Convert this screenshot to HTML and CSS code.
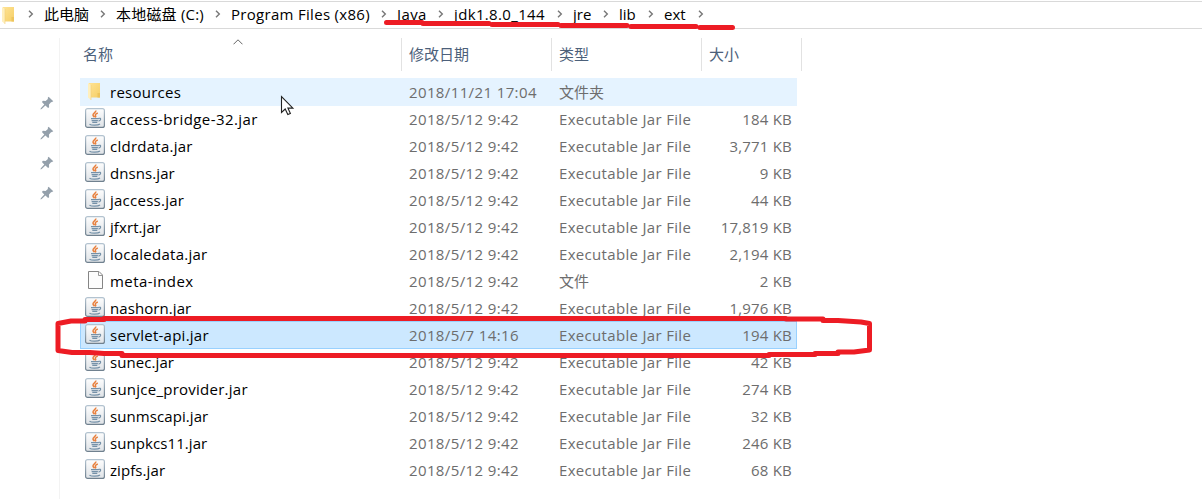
FILE: index.html
```html
<!DOCTYPE html>
<html lang="zh-CN">
<head>
  <meta charset="UTF-8" />
  <title>ext</title>
  <link rel="stylesheet" href="styles.css">
</head>
<body>

  <svg class="defs">
    <linearGradient id="fold" x1="0" y1="0" x2="1" y2="1">
      <stop offset="0" stop-color="#ffe394"/><stop offset="1" stop-color="#f5cf68"/>
    </linearGradient>
    <linearGradient id="tile" x1="0" y1="0" x2="0" y2="1">
      <stop offset="0" stop-color="#fdfdfd"/><stop offset="1" stop-color="#dfe3e7"/>
    </linearGradient>
    <linearGradient id="edge" x1="0" y1="0" x2="0" y2="1">
      <stop offset="0" stop-color="#b3c3d0"/><stop offset="1" stop-color="#70818f"/>
    </linearGradient>
    <symbol id="folder" viewBox="0 0 20 20">
      <path d="M4 2h11v14.500H4z" fill="url(#fold)"/>
      <path d="M12.500 12h2.500v4.500h-2.500z" fill="#edc45c"/>
      <path d="M3 2l3 2v15L3 16.500z" fill="#ffefbd"/>
      <path d="M6 4v15" stroke="#f0cf78" stroke-width=".6"/>
    </symbol>
    <symbol id="jar" viewBox="0 0 20 20">
      <rect x=".6" y=".6" width="18.800" height="18.800" rx="2" fill="url(#tile)" stroke="url(#edge)" stroke-width="1.200"/>
      <path d="M10.800 2.500c.6 1.900-3.400 2.800-2.800 4.700.3.900 1.300 1.400 1.500 2.100M12.800 5c-1.800.7-3 1.600-2.300 2.600.5.700.3 1.200-.3 1.800" fill="none" stroke="#e8803e" stroke-width="1.500"/>
      <path d="M6 10.700h7.700M6.600 12.600h6.300M7.300 14.300h5M4.500 16.200c2 1.400 8.500 1.300 10.500-.2M13.700 10.400c2.600-.8 2.600 2-.2 2.700" fill="none" stroke="#7591a8" stroke-width="1.200"/>
    </symbol>
    <symbol id="file" viewBox="0 0 20 20">
      <path d="M3.500 1.500h10.500l3.500 3.500v13.500H3.500z" fill="#fcfcfc" stroke="#858585"/>
      <path d="M13.500 1.500v4h4" fill="none" stroke="#999"/>
    </symbol>
    <symbol id="pin" viewBox="0 0 14 14">
      <path d="M8.600.7l4.700 4.500-1.300.9-1 .1-2 2.300.1 2.700-1 .8-2.700-2.600-3.700 3.700-1.200.3.300-1.200 3.500-3.600L1.900 6l1-1.200 2.700.1L7.900 3l-.1-1.300z" fill="#94a0ab"/>
    </symbol>
    <symbol id="arrow" viewBox="0 0 6 8">
      <path d="M1 .8L4.300 4 1 7.200" fill="none" stroke="#777" stroke-width="1.400"/>
    </symbol>
  </svg>

  <div class="address">
    <svg class="address-icon"><use href="#folder"/></svg>
    <svg class="arrow"><use href="#arrow"/></svg>
    <span class="crumb cjk">此电脑</span>
    <svg class="arrow"><use href="#arrow"/></svg>
    <span class="crumb drive">本地磁盘 (C:)</span>
    <svg class="arrow"><use href="#arrow"/></svg>
    <span class="crumb programs">Program Files (x86)</span>
    <svg class="arrow"><use href="#arrow"/></svg>
    <span class="crumb java">Java</span>
    <svg class="arrow"><use href="#arrow"/></svg>
    <span class="crumb jdk">jdk1.8.0_144</span>
    <svg class="arrow"><use href="#arrow"/></svg>
    <span class="crumb jre">jre</span>
    <svg class="arrow"><use href="#arrow"/></svg>
    <span class="crumb lib">lib</span>
    <svg class="arrow"><use href="#arrow"/></svg>
    <span class="crumb ext">ext</span>
    <svg class="arrow"><use href="#arrow"/></svg>
  </div>

  <div class="explorer">
    <div class="sidebar">
      <svg class="pin"><use href="#pin"/></svg>
      <svg class="pin"><use href="#pin"/></svg>
      <svg class="pin"><use href="#pin"/></svg>
      <svg class="pin"><use href="#pin"/></svg>
    </div>

    <div class="files">
      <div class="head">
        <span>名称<svg class="sort" viewBox="0 0 10 6"><path d="M.5 5.300L5 .8l4.500 4.500" fill="none" stroke="#666"/></svg></span>
        <span>修改日期</span>
        <span>类型</span>
        <span>大小</span>
      </div>
      <div class="row hover"><svg class="icon"><use href="#folder"/></svg><span class="name">resources</span><span class="date">2018/11/21 17:04</span><span class="type cn">文件夹</span><span class="size"></span></div>
      <div class="row"><svg class="icon"><use href="#jar"/></svg><span class="name wide">access-bridge-32.jar</span><span class="date">2018/5/12 9:42</span><span class="type">Executable Jar File</span><span class="size">184 KB</span></div>
      <div class="row"><svg class="icon"><use href="#jar"/></svg><span class="name">cldrdata.jar</span><span class="date">2018/5/12 9:42</span><span class="type">Executable Jar File</span><span class="size">3,771 KB</span></div>
      <div class="row"><svg class="icon"><use href="#jar"/></svg><span class="name tight">dnsns.jar</span><span class="date">2018/5/12 9:42</span><span class="type">Executable Jar File</span><span class="size">9 KB</span></div>
      <div class="row"><svg class="icon"><use href="#jar"/></svg><span class="name">jaccess.jar</span><span class="date">2018/5/12 9:42</span><span class="type">Executable Jar File</span><span class="size">44 KB</span></div>
      <div class="row"><svg class="icon"><use href="#jar"/></svg><span class="name tight">jfxrt.jar</span><span class="date">2018/5/12 9:42</span><span class="type">Executable Jar File</span><span class="size">17,819 KB</span></div>
      <div class="row"><svg class="icon"><use href="#jar"/></svg><span class="name">localedata.jar</span><span class="date">2018/5/12 9:42</span><span class="type">Executable Jar File</span><span class="size">2,194 KB</span></div>
      <div class="row"><svg class="icon"><use href="#file"/></svg><span class="name wide">meta-index</span><span class="date">2018/5/12 9:42</span><span class="type cn">文件</span><span class="size">2 KB</span></div>
      <div class="row"><svg class="icon"><use href="#jar"/></svg><span class="name tight">nashorn.jar</span><span class="date">2018/5/12 9:42</span><span class="type">Executable Jar File</span><span class="size">1,976 KB</span></div>
      <div class="row selected"><svg class="icon"><use href="#jar"/></svg><span class="name">servlet-api.jar</span><span class="date">2018/5/7 14:16</span><span class="type">Executable Jar File</span><span class="size">194 KB</span></div>
      <div class="row"><svg class="icon"><use href="#jar"/></svg><span class="name tight">sunec.jar</span><span class="date">2018/5/12 9:42</span><span class="type">Executable Jar File</span><span class="size">42 KB</span></div>
      <div class="row"><svg class="icon"><use href="#jar"/></svg><span class="name">sunjce_provider.jar</span><span class="date">2018/5/12 9:42</span><span class="type">Executable Jar File</span><span class="size">274 KB</span></div>
      <div class="row"><svg class="icon"><use href="#jar"/></svg><span class="name tight">sunmscapi.jar</span><span class="date">2018/5/12 9:42</span><span class="type">Executable Jar File</span><span class="size">32 KB</span></div>
      <div class="row"><svg class="icon"><use href="#jar"/></svg><span class="name tight">sunpkcs11.jar</span><span class="date">2018/5/12 9:42</span><span class="type">Executable Jar File</span><span class="size">246 KB</span></div>
      <div class="row"><svg class="icon"><use href="#jar"/></svg><span class="name tight">zipfs.jar</span><span class="date">2018/5/12 9:42</span><span class="type">Executable Jar File</span><span class="size">68 KB</span></div>
    </div>
  </div>

  <!-- pen marks and mouse pointer over the window -->
  <svg class="marks" viewBox="0 0 1202 499">
    <g fill="none" stroke="#ed1c24" stroke-width="5" stroke-linecap="round" stroke-linejoin="round">
      <path d="M386.500 22.500H422M423 23.500H489M492 24.500H558M561 25.500H627M631 26.500H696M700 27.500H732.500"/>
      <path d="M138 318.500H786M138 318.500H104V319.500H85V321H71L58 323.500V350.500L72 352.500H90L104 353.500H122V355.500H769V354.500H815V353.500H838V352H854L869.500 350V323.500L861 322L838 320.500H823V319H786"/>
    </g>
    <path d="M281.500 96.500v16l3.700-3.500 2.600 5.600 2.600-1.200-2.500-5.300h5z" fill="#fff" stroke="#222" stroke-width="1.100"/>
  </svg>

</body>
</html>
```
FILE: styles.css
```css
* {
  box-sizing: border-box;
}

body {
  margin: 0;
  height: 499px;
  overflow: hidden;
  background: #fff;
  font-family: "Open Sans", "Noto Sans CJK SC", sans-serif;
  font-size: 15px;
  color: #000;
}

svg {
  display: block;
  flex: none;
}

.defs {
  position: absolute;
  width: 0;
  height: 0;
}

.address {
  display: flex;
  align-items: center;
  height: 28px;
  margin-top: 1px;
  border-top: 1px solid #d9d9d9;
  border-bottom: 1px solid #d9d9d9;
  white-space: nowrap;
}

.address-icon {
  width: 20px;
  height: 20px;
  margin: 0 8px 0 -1px;
}

.arrow {
  width: 6px;
  height: 8px;
  margin: 0 10px 2px 11px;
}

.address-icon + .arrow {
  margin-left: 1px;
}

.crumb {
  line-height: 24px;
  padding-bottom: 2px;
}

.cjk { width: 45px; }
.drive { width: 88px; letter-spacing: 0.2px; }
.programs { width: 139px; letter-spacing: 0.3px; }
.java { width: 30px; letter-spacing: 0.4px; }
.jdk { width: 92px; letter-spacing: 0.35px; }
.jre { width: 19px; }
.lib { width: 18px; }
.ext { width: 23px; }

.explorer {
  display: flex;
  height: 461px;
  margin-top: 9px;
}

.sidebar {
  display: flex;
  flex-direction: column;
  align-items: flex-end;
  gap: 16px;
  width: 60px;
  padding: 58px 5px 0 0;
  border-right: 1px solid #f3f3f3;
}

.pin {
  width: 14px;
  height: 14px;
}

.files {
  width: 742px;
  padding-left: 20px;
}

.head {
  display: grid;
  grid-template-columns: 322px 150px 150px 100px;
  height: 32px;
  margin-bottom: 8px;
  line-height: 33px;
  color: #4c607a;
}

.head span {
  position: relative;
  padding-left: 7px;
  border-right: 1px solid #e2e2e2;
}

.head span:first-child {
  padding-left: 3px;
}

.sort {
  position: absolute;
  top: 1px;
  left: 153px;
  width: 10px;
  height: 6px;
}

.row {
  display: grid;
  grid-template-columns: 30px 299px 150px 140px 93px;
  width: 717px;
  height: 27px;
  line-height: 28px;
  color: #6d6d6d;
  white-space: nowrap;
}

.icon {
  width: 20px;
  height: 20px;
  margin: 3px 0 0 5px;
}

.name {
  color: #000;
  letter-spacing: 0.25px;
}

.name.wide {
  letter-spacing: 0.43px;
}

.name.tight {
  letter-spacing: 0.08px;
}

.date {
  letter-spacing: 0.38px;
}

.type {
  letter-spacing: 0.32px;
}

.type.cn {
  letter-spacing: 0;
}

.size {
  text-align: right;
  letter-spacing: 0.2px;
}

.hover,
.selected {
  height: 28px;
  margin-bottom: -1px;
}

.hover {
  background: #e5f3ff;
}

.selected {
  background: #cce8ff;
  box-shadow: inset 0 0 0 1px #99d1ff;
}

.marks {
  position: absolute;
  top: 0;
  left: 0;
  width: 1202px;
  height: 499px;
  pointer-events: none;
}
```
